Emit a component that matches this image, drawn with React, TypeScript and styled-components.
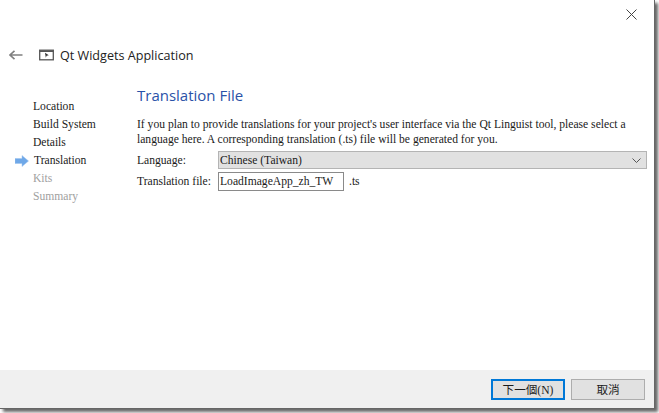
import styled, { createGlobalStyle } from "styled-components";

const GlobalStyle = createGlobalStyle`
  html, body {
    margin: 0;
    padding: 0;
    background: #fff;
    overflow: hidden;
  }
`;

const steps = [
  { label: "Location", state: "done" },
  { label: "Build System", state: "done" },
  { label: "Details", state: "done" },
  { label: "Translation", state: "current" },
  { label: "Kits", state: "todo" },
  { label: "Summary", state: "todo" },
];

const Screen = styled.div`
  width: 659px;
  height: 413px;
  box-sizing: border-box;
  padding: 0 4px 4px 0;
  background: #fff;
`;
const Dialog = styled.div`
  height: 100%;
  box-sizing: border-box;
  display: flex;
  flex-direction: column;
  background: #fff;
  border-right: 1px solid #666;
  border-bottom: 1px solid #666;
  box-shadow: 3px 3px 3px rgba(0, 0, 0, 0.6);
  font-family: "Liberation Serif", "Times New Roman", serif;
  font-size: 11.6px;
  color: #1a1a1a;
`;
const CloseRow = styled.div`
  height: 38px;
  display: flex;
  justify-content: flex-end;
  align-items: flex-start;
  padding: 9px 17px 0 0;
  box-sizing: border-box;
`;
const TitleBar = styled.div`
  height: 34px;
  display: flex;
  align-items: center;
  padding-left: 9px;
  font-family: "Open Sans", "Noto Sans", sans-serif;
  font-size: 12.6px;
  color: #222;
`;
const TitleIcon = styled.svg`
  margin: 0 6px 0 16px;
`;
const Body = styled.div`
  flex: 1;
  display: flex;
`;
const Sidebar = styled.ul`
  list-style: none;
  margin: 0;
  padding: 26px 0 0 15px;
  width: 137px;
  box-sizing: border-box;
`;
const Step = styled.li<{ $state: string }>`
  height: 18px;
  line-height: 18px;
  display: flex;
  align-items: center;
  color: ${(p) => (p.$state === "todo" ? "#a0a0a0" : "#1a1a1a")};
  padding-left: ${(p) => (p.$state === "current" ? "0" : "18px")};
`;
const StepArrow = styled.svg`
  margin-right: 5px;
`;
const Page = styled.div`
  flex: 1;
  padding: 13px 7px 0 0;
  min-width: 0;
`;
const Heading = styled.h1`
  margin: 0 0 12px;
  font-family: "Open Sans", "Noto Sans", sans-serif;
  font-weight: 400;
  font-size: 15px;
  line-height: 20px;
  color: #2a52a8;
`;
const Intro = styled.p`
  margin: 0 0 4px;
  line-height: 15px;
`;
const FormGrid = styled.div`
  display: grid;
  grid-template-columns: 81px 1fr;
  row-gap: 3px;
  align-items: center;
`;
const Select = styled.div`
  height: 16px;
  display: flex;
  align-items: center;
  justify-content: space-between;
  padding: 0 5px 0 1px;
  background: #e1e1e1;
  border: 1px solid #b4b4b4;
`;
const FileRow = styled.div`
  display: flex;
  align-items: center;
  gap: 5px;
`;
const FileInput = styled.div`
  width: 123px;
  height: 17px;
  line-height: 17px;
  box-sizing: content-box;
  padding-left: 1px;
  border: 1px solid #8a8a8a;
  background: #fff;
`;
const Footer = styled.div`
  height: 38px;
  box-sizing: border-box;
  display: flex;
  justify-content: flex-end;
  align-items: center;
  gap: 6px;
  padding-right: 9px;
  background: #f0f0f0;
`;
const Button = styled.button<{ $primary?: boolean }>`
  width: 74px;
  height: 21px;
  padding: 0;
  background: #e1e1e1;
  border: ${(p) => (p.$primary ? "2px solid #0078d7" : "1px solid #adadad")};
  font-family: "Liberation Serif", "Noto Sans CJK TC", serif;
  font-size: 11.6px;
  color: #1a1a1a;
`;

export default function App() {
  return (
    <Screen>
      <GlobalStyle />
      <Dialog>
        <CloseRow>
          <svg width="11" height="11" viewBox="0 0 11 11">
            <path d="M0.5 0.5 L10.5 10.5 M10.5 0.5 L0.5 10.5" stroke="#444" strokeWidth="1" />
          </svg>
        </CloseRow>
        <TitleBar>
          <svg width="14" height="10" viewBox="0 0 14 10">
            <path d="M13.5 5 H1 M5.5 0.8 L1 5 L5.5 9.2" fill="none" stroke="#808080" strokeWidth="1.6" />
          </svg>
          <TitleIcon width="15" height="12" viewBox="0 0 15 12">
            <rect x="0.7" y="1.2" width="13.6" height="9.6" fill="none" stroke="#555" strokeWidth="1.3" />
            <path d="M0.7 2.2 H14.3" stroke="#555" strokeWidth="1.6" />
            <path d="M6 3.8 L9.8 6.2 L7.6 6.8 L6.8 8.8 Z" fill="#333" />
          </TitleIcon>
          Qt Widgets Application
        </TitleBar>
        <Body>
          <Sidebar>
            {steps.map((step) => (
              <Step key={step.label} $state={step.state}>
                {step.state === "current" && (
                  <StepArrow width="14" height="12" viewBox="0 0 14 12">
                    <path d="M0 3.5 H7 V0.5 L13.5 6 L7 11.5 V8.5 H0 Z" fill="#6fa8e8" stroke="#9cc3ef" strokeWidth="0.5" />
                  </StepArrow>
                )}
                {step.label}
              </Step>
            ))}
          </Sidebar>
          <Page>
            <Heading>Translation File</Heading>
            <Intro>
              If you plan to provide translations for your project's user interface via the Qt Linguist tool, please select a language here. A corresponding translation (.ts) file will be generated for you.
            </Intro>
            <FormGrid>
              <span>Language:</span>
              <Select>
                Chinese (Taiwan)
                <svg width="9" height="5" viewBox="0 0 9 5">
                  <path d="M0.5 0.5 L4.5 4.5 L8.5 0.5" fill="none" stroke="#555" strokeWidth="1" />
                </svg>
              </Select>
              <span>Translation file:</span>
              <FileRow>
                <FileInput>LoadImageApp_zh_TW</FileInput>
                <span>.ts</span>
              </FileRow>
            </FormGrid>
          </Page>
        </Body>
        <Footer>
          <Button $primary>下一個(N)</Button>
          <Button>取消</Button>
        </Footer>
      </Dialog>
    </Screen>
  );
}
